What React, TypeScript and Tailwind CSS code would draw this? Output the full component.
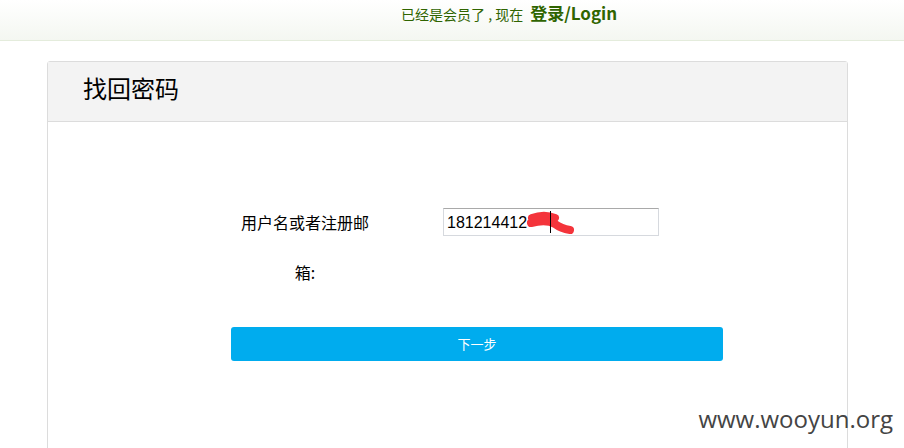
import React from "react";

const cjk = { fontFamily: '"Noto Sans CJK SC", "Liberation Sans", sans-serif' };

function TopBar() {
  return (
    <div className="h-[41px] border-b border-[#e4ecdc] bg-gradient-to-b from-white to-[#f4f7f1]">
      <div className="flex items-baseline pl-[401px] pt-[2px] leading-[22px] text-[#2f6400]">
        <span className="text-[14px]">已经是会员了&nbsp;,&nbsp;现在</span>
        <a href="#" className="ml-[7px] text-[17px] font-bold">
          登录/Login
        </a>
      </div>
    </div>
  );
}

function UsernameField() {
  return (
    <div className="relative mt-[11px] h-[28px] w-[216px] border border-[#d6d9de] border-t-[#a9a9a9] bg-white">
      <input
        defaultValue="181214412"
        className="h-full w-full px-[3px] text-[16px] text-black outline-none"
        style={{ fontFamily: '"Liberation Sans", sans-serif' }}
      />
      <svg className="pointer-events-none absolute left-[82px] top-[1px]" width="50" height="26" viewBox="0 0 50 26">
        <path
          d="M6 8 C14 5, 22 5, 29 8 M5 13 C13 11, 22 10, 29 14 C33 17, 38 19, 44 20"
          fill="none"
          stroke="#f4343b"
          strokeWidth="8"
          strokeLinecap="round"
        />
        <line x1="24.5" y1="1" x2="24.5" y2="23" stroke="#000" strokeWidth="1" />
      </svg>
    </div>
  );
}

export default function App() {
  return (
    <div className="relative h-[448px] overflow-hidden bg-white text-black" style={cjk}>
      <TopBar />
      <div className="ml-[47px] mt-[20px] h-[420px] w-[801px] rounded-t-[3px] border border-[#dcdcdc]">
        <div className="h-[60px] border-b border-[#dcdcdc] bg-[#f3f3f3] pl-[35px] pt-[11px]">
          <h1 className="text-[24px] leading-[30px]">找回密码</h1>
        </div>
        <form className="pt-[75px]">
          <div className="flex items-start">
            <label className="ml-[192px] w-[130px] text-center text-[16px] leading-[50px]">
              用户名或者注册邮箱:
            </label>
            <div className="ml-[73px]">
              <UsernameField />
            </div>
          </div>
          <button
            type="button"
            className="ml-[183px] mt-[30px] h-[34px] w-[492px] rounded-[3px] bg-[#00acee] text-[13px] text-white"
          >
            下一步
          </button>
        </form>
      </div>
      <div
        className="absolute right-[11px] top-[401px] text-[24px] text-[#444]"
        style={{ fontFamily: '"Open Sans", sans-serif' }}
      >
        www.wooyun.org
      </div>
    </div>
  );
}
